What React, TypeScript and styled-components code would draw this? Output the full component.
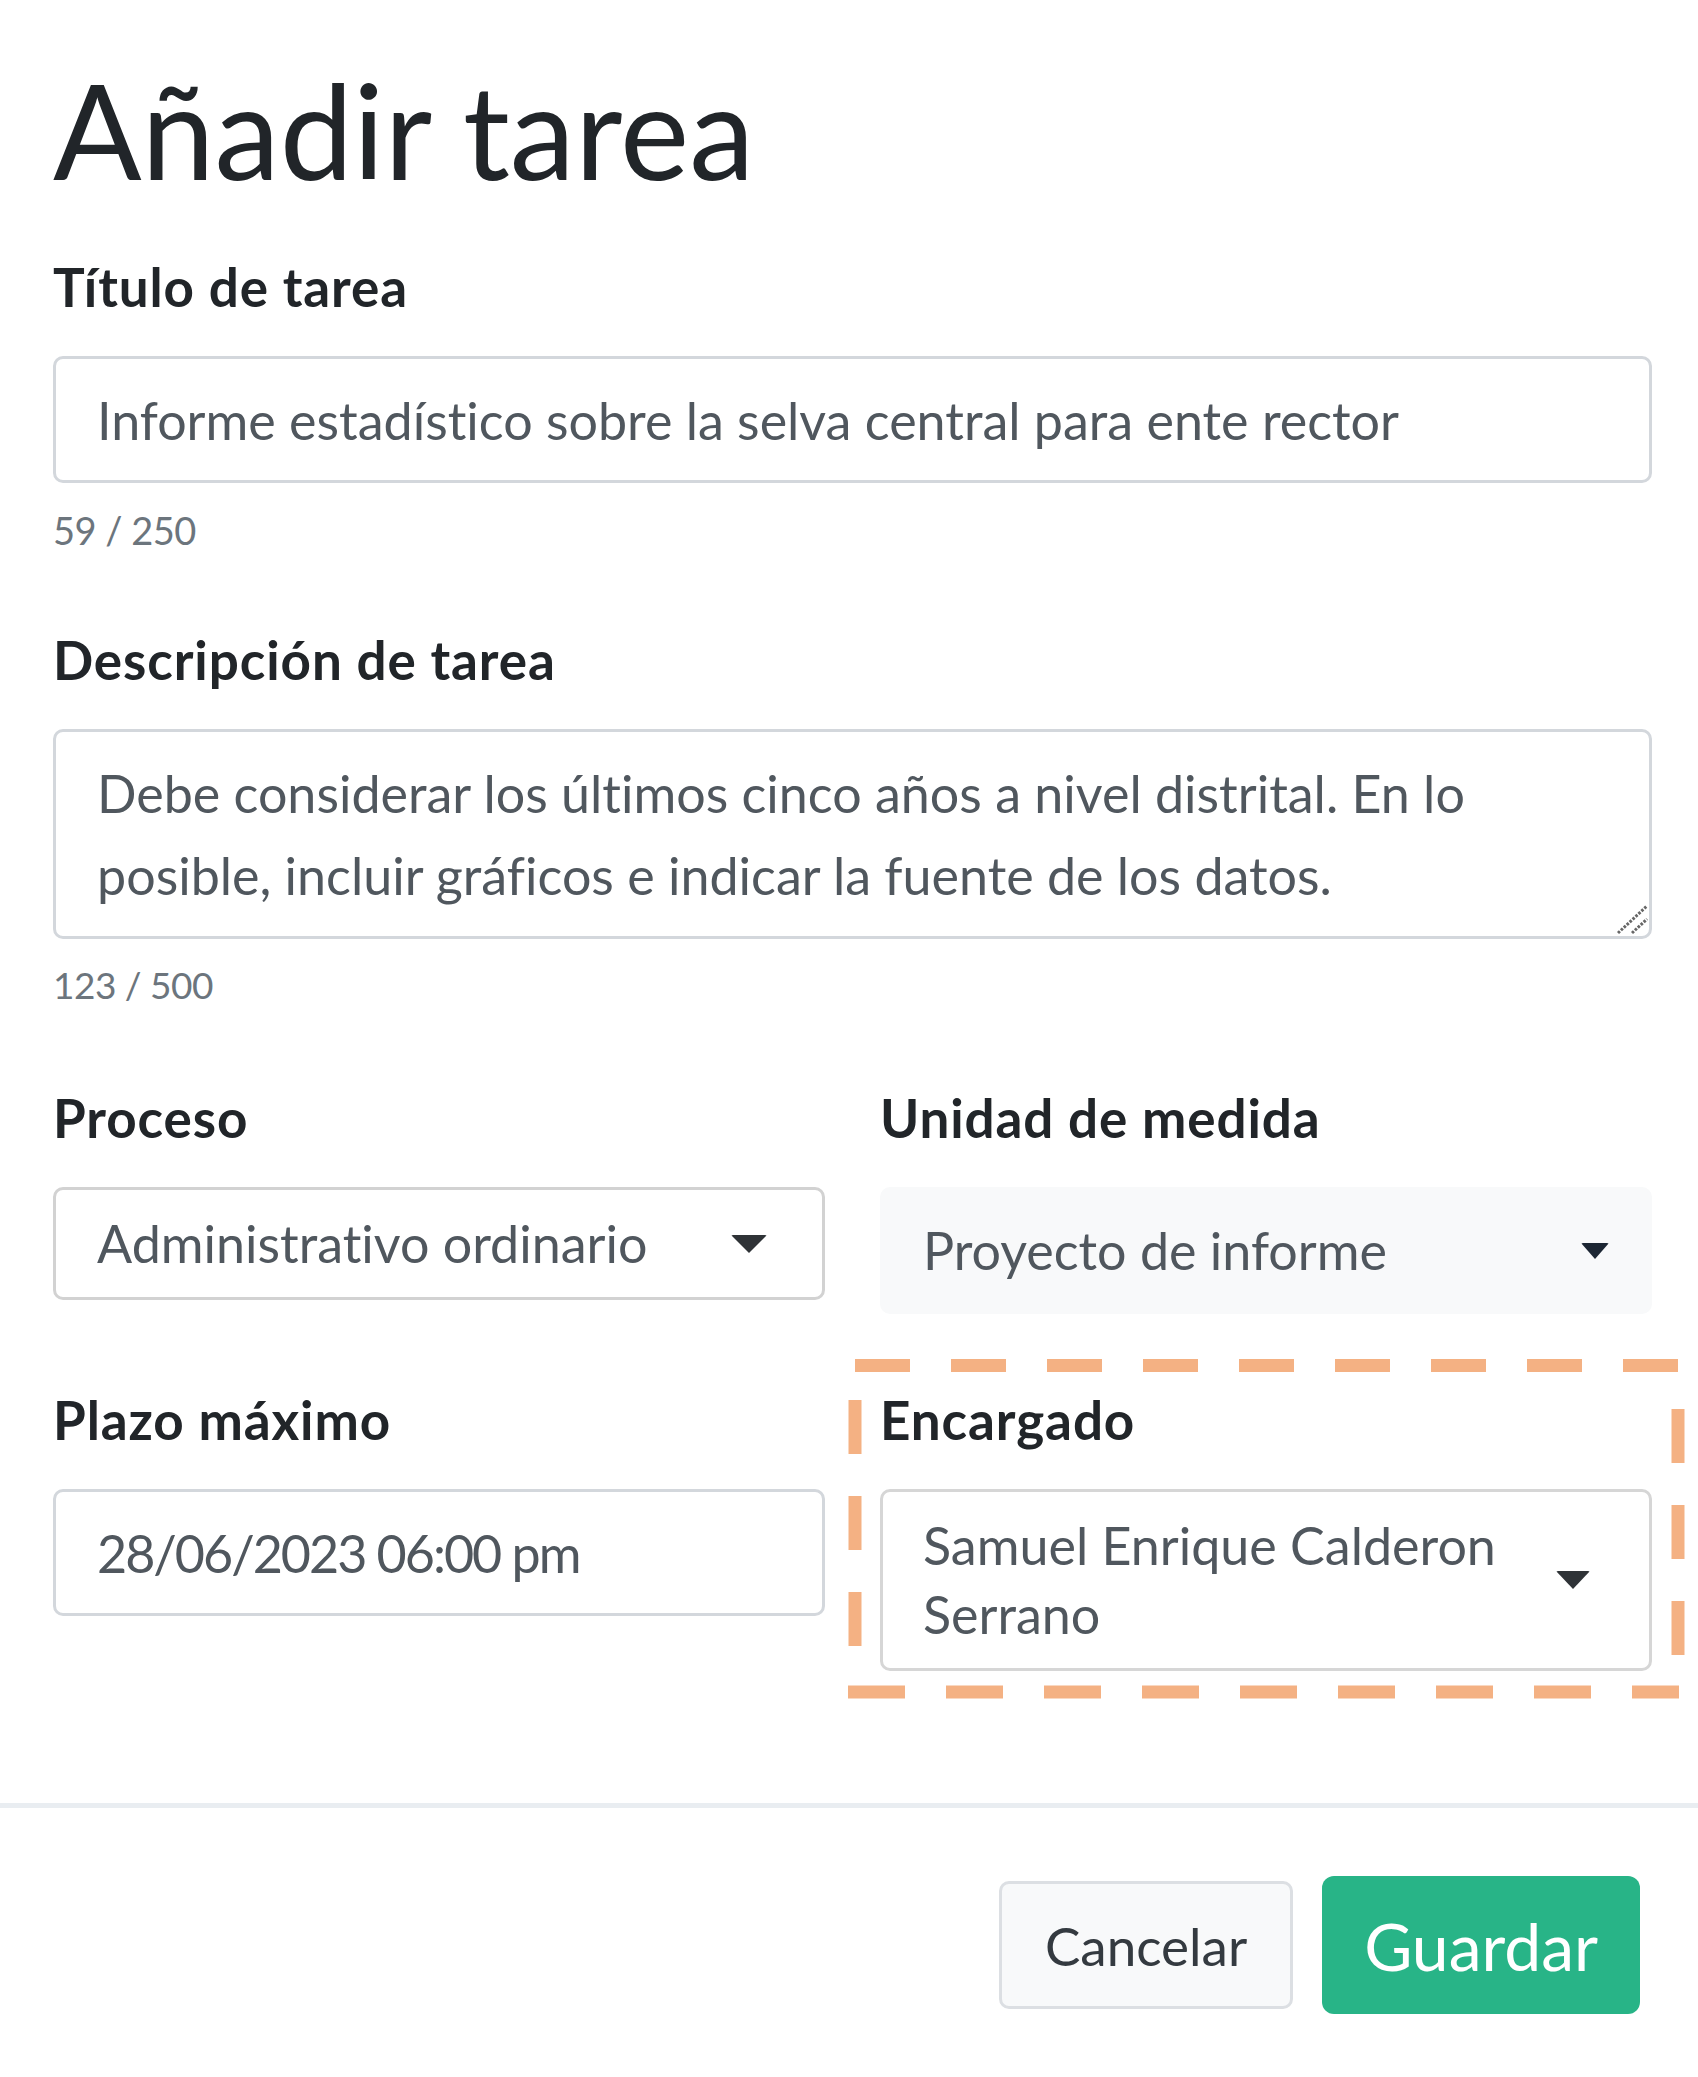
import React from "react";
import styled, { createGlobalStyle } from "styled-components";

const GlobalStyle = createGlobalStyle`
  html, body { margin: 0; padding: 0; background: #ffffff; }
  body {
    font-family: Lato, "Noto Sans", "Liberation Sans", sans-serif;
    color: #212529;
  }
  * {
    box-sizing: border-box;
    font-variant-ligatures: none;
    font-feature-settings: "liga" 0, "clig" 0;
  }
`;

const Page = styled.div`
  width: 1698px;
  min-height: 2077px;
  display: flex;
  flex-direction: column;
  overflow: hidden;
`;

const Body = styled.div`
  padding: 51px 46px 0 53px;
`;

const Title = styled.h1`
  margin: 0;
  font-size: 131px;
  line-height: 158px;
  font-weight: 400;
  color: #212529;
`;

const Field = styled.div<{ $mt?: number }>`
  margin-top: ${(p) => p.$mt ?? 0}px;
  display: flex;
  flex-direction: column;
  position: relative;
`;

const Label = styled.label`
  font-size: 53px;
  font-weight: 700;
  letter-spacing: 0.9px;
  line-height: 78px;
  color: #212529;
  margin-bottom: 30px;
`;

const TextInput = styled.input<{ $ls?: number }>`
  height: 127px;
  width: 100%;
  border: 3px solid #d3d7dc;
  border-radius: 10px;
  padding: 0 41px;
  font-family: inherit;
  font-size: 52px;
  letter-spacing: ${(p) => p.$ls ?? 0}px;
  line-height: 82.5px;
  color: #50575e;
  background: #fff;
  outline: none;
`;

const AreaWrap = styled.div`
  position: relative;
`;

const TextArea = styled.textarea`
  display: block;
  width: 100%;
  height: 210px;
  border: 3px solid #d3d7dc;
  border-radius: 10px;
  padding: 19.5px 41px;
  font-family: inherit;
  font-size: 52px;
  line-height: 82.5px;
  color: #50575e;
  background: #fff;
  resize: none;
  outline: none;
  overflow: hidden;
`;

const Grip = styled.svg`
  position: absolute;
  right: 3px;
  bottom: 4px;
  width: 34px;
  height: 32px;
`;

const Counter = styled.div<{ $mt: number; $size: number }>`
  margin-top: ${(p) => p.$mt}px;
  font-size: ${(p) => p.$size}px;
  letter-spacing: -0.5px;
  line-height: 64.5px;
  color: #6c757d;
`;

const Grid = styled.div`
  margin-top: 61.5px;
  display: grid;
  grid-template-columns: 1fr 1fr;
  column-gap: 55px;
  row-gap: 67px;
  align-items: start;
`;

const SelectBox = styled.div<{ $variant: "plain" | "filled" | "multi" }>`
  display: flex;
  align-items: center;
  border-radius: 10px;
  font-size: 52px;
  color: #50575e;
  ${(p) =>
    p.$variant === "plain"
      ? `height: 113px; border: 3px solid #d2d2d2; background: #fff; padding: 0 55px 0 41px;`
      : p.$variant === "filled"
      ? `height: 127px; border: 3px solid #f8f9fa; background: #f8f9fa; padding: 0 40px 0 40px;`
      : `min-height: 182px; border: 3px solid #d6d6d6; background: #fff; padding: 17px 59px 17px 40px;`}
`;

const SelectValue = styled.div<{ $lh: number }>`
  flex: 1;
  line-height: ${(p) => p.$lh}px;
  padding-right: 24px;
`;

const Caret = styled.span<{ $w: number; $h: number; $color: string }>`
  flex: none;
  width: 0;
  height: 0;
  border-left: ${(p) => p.$w / 2}px solid transparent;
  border-right: ${(p) => p.$w / 2}px solid transparent;
  border-top: ${(p) => p.$h}px solid ${(p) => p.$color};
  border-radius: 2px;
  filter: blur(0.6px);
`;

const Highlight = styled.svg`
  position: absolute;
  left: -32px;
  top: -22px;
  width: 850px;
  height: 342px;
  overflow: visible;
  pointer-events: none;
`;

const Footer = styled.div`
  margin-top: 132px;
  border-top: 5px solid #e9edf1;
  padding: 68px 58px 62px 0;
  display: flex;
  justify-content: flex-end;
  align-items: center;
  gap: 29px;
`;

const Button = styled.button<{ $primary?: boolean }>`
  font-family: inherit;
  border-radius: ${(p) => (p.$primary ? 12 : 10)}px;
  cursor: pointer;
  ${(p) =>
    p.$primary
      ? `height: 138px; padding: 0 42px; font-size: 66px; background: #28b487; color: #fff; border: none;`
      : `height: 128px; padding: 0 43px; font-size: 53px; background: #f8f9fa; color: #343a40; border: 3px solid #dcdfe3;`}
`;

const ORANGE = "#f4b183";

export default function App() {
  return (
    <Page>
      <GlobalStyle />
      <Body>
        <Title>Añadir tarea</Title>

        <Field $mt={39}>
          <Label>Título de tarea</Label>
          <TextInput
            readOnly
            value="Informe estadístico sobre la selva central para ente rector"
          />
          <Counter $mt={15} $size={38}>59 / 250</Counter>
        </Field>

        <Field $mt={58.5}>
          <Label>Descripción de tarea</Label>
          <AreaWrap>
            <TextArea
              readOnly
              rows={2}
              value="Debe considerar los últimos cinco años a nivel distrital. En lo posible, incluir gráficos e indicar la fuente de los datos."
            />
            <Grip viewBox="0 0 34 32">
              <line x1="3" y1="30" x2="32" y2="3" stroke="#666" strokeWidth="3" strokeDasharray="2.6 1.4" />
              <line x1="17" y1="30" x2="32" y2="16" stroke="#666" strokeWidth="3" strokeDasharray="2.6 1.4" />
            </Grip>
          </AreaWrap>
          <Counter $mt={14} $size={37}>123 / 500</Counter>
        </Field>

        <Grid>
          <Field>
            <Label>Proceso</Label>
            <SelectBox $variant="plain">
              <SelectValue $lh={82.5}>Administrativo ordinario</SelectValue>
              <Caret $w={36} $h={18} $color="#2f3337" />
            </SelectBox>
          </Field>

          <Field>
            <Label>Unidad de medida</Label>
            <SelectBox $variant="filled">
              <SelectValue $lh={82.5}>Proyecto de informe</SelectValue>
              <Caret $w={29} $h={16} $color="#1c2633" />
            </SelectBox>
          </Field>

          <Field>
            <Label>Plazo máximo</Label>
            <TextInput readOnly $ls={-2} value="28/06/2023 06:00 pm" />
          </Field>

          <Field>
            <Label>Encargado</Label>
            <SelectBox $variant="multi">
              <SelectValue $lh={69}>Samuel Enrique Calderon Serrano</SelectValue>
              <Caret $w={34} $h={18} $color="#2f3337" />
            </SelectBox>
            <Highlight viewBox="0 0 850 342">
              <line x1="7" y1="6.5" x2="837" y2="6.5" stroke={ORANGE} strokeWidth="13" strokeDasharray="55 41" />
              <line x1="0" y1="333" x2="831" y2="333" stroke={ORANGE} strokeWidth="13" strokeDasharray="57 41" />
              <line x1="7" y1="41" x2="7" y2="330" stroke={ORANGE} strokeWidth="13" strokeDasharray="54 42" />
              <line x1="830" y1="50" x2="830" y2="320" stroke={ORANGE} strokeWidth="13" strokeDasharray="54 42" />
            </Highlight>
          </Field>
        </Grid>
      </Body>

      <Footer>
        <Button>Cancelar</Button>
        <Button $primary>Guardar</Button>
      </Footer>
    </Page>
  );
}
